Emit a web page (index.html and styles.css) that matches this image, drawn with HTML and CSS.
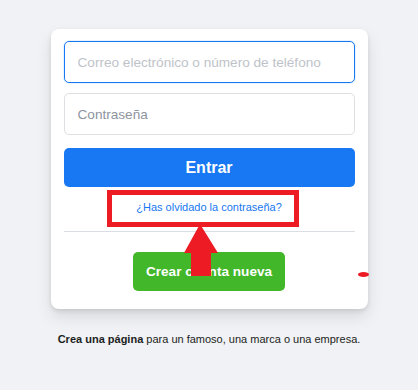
FILE: index.html
```html
<!DOCTYPE html>
<html lang="es">
<head>
    <meta charset="UTF-8">
    <meta name="viewport" content="width=device-width, initial-scale=1.0">
    <title>Iniciar sesión</title>
    <link rel="stylesheet" href="styles.css">
</head>
<body>
    <div class="login-card">
        <form class="login-form">
            <input class="field field-focus" type="text" placeholder="Correo electrónico o número de teléfono">
            <input class="field" type="password" placeholder="Contraseña">
            <button class="btn-login" type="button">Entrar</button>
            <div class="forgot">
                <a href="#">¿Has olvidado la contraseña?</a>
            </div>
            <div class="divider"></div>
            <div class="create-wrap">
                <button class="btn-create" type="button">Crear cuenta nueva</button>
            </div>
        </form>

        <!-- annotation marks drawn over the card -->
        <div class="mark-box"></div>
        <svg class="mark-arrow" width="36" height="53" viewBox="0 0 36 53">
            <polygon points="17,0 35,29 28,29 28,52 8,52 8,29 1,29" fill="#ed1c24"/>
        </svg>
        <div class="mark-dot"></div>
    </div>

    <p class="page-note"><b>Crea una página</b> para un famoso, una marca o una empresa.</p>
</body>
</html>
```

FILE: styles.css
```css
* {
    margin: 0;
    padding: 0;
    box-sizing: border-box;
}

body {
    font-family: 'Liberation Sans', Arial, sans-serif;
    background: #f0f2f5;
    padding-top: 29px;
    color: #1c1e21;
}

.login-card {
    position: relative;
    width: 317px;
    margin: 0 auto;
    background: #fff;
    border-radius: 8px;
    padding: 12px 13px 18px;
    box-shadow: 0 2px 4px rgba(0, 0, 0, 0.1), 0 8px 16px rgba(0, 0, 0, 0.1);
}

.login-form {
    display: flex;
    flex-direction: column;
}

.field {
    height: 42px;
    width: 100%;
    border: 1px solid #dddfe2;
    border-radius: 5px;
    padding: 0 13px;
    font-family: inherit;
    font-size: 13.6px;
    color: #1d2129;
    outline: none;
    margin-bottom: 10px;
}

.field::placeholder {
    color: #8d949e;
}

.field-focus {
    border-color: #1877f2;
    box-shadow: 0 0 0 1px #e7f3ff;
}

.field-focus::placeholder {
    color: #bec3c9;
}

.btn-login {
    margin-top: 3px;
    height: 39px;
    border: none;
    border-radius: 5px;
    background: #1877f2;
    color: #fff;
    font-family: inherit;
    font-size: 16px;
    font-weight: bold;
}

.forgot {
    margin-top: 11px;
    text-align: center;
    line-height: 15px;
}

.forgot a {
    color: #1877f2;
    font-size: 11px;
    text-decoration: none;
}

.divider {
    margin-top: 16px;
    height: 1px;
    background: #dadde1;
}

.create-wrap {
    margin-top: 20px;
    display: flex;
    justify-content: center;
}

.btn-create {
    height: 39px;
    padding: 0 13px;
    border: none;
    border-radius: 5px;
    background: #42b72a;
    color: #fff;
    font-family: inherit;
    font-size: 13.6px;
    font-weight: bold;
}

/* red annotation */
.mark-box {
    position: absolute;
    left: 56px;
    top: 161px;
    width: 192px;
    height: 37px;
    border: 5px solid #ed1c24;
}

.mark-arrow {
    position: absolute;
    left: 132px;
    top: 195px;
}

.mark-dot {
    position: absolute;
    left: 307px;
    top: 243px;
    width: 11px;
    height: 5px;
    border-radius: 50%;
    background: #ed1c24;
}

.page-note {
    margin-top: 23px;
    text-align: center;
    font-size: 11px;
    line-height: 14px;
}
```
